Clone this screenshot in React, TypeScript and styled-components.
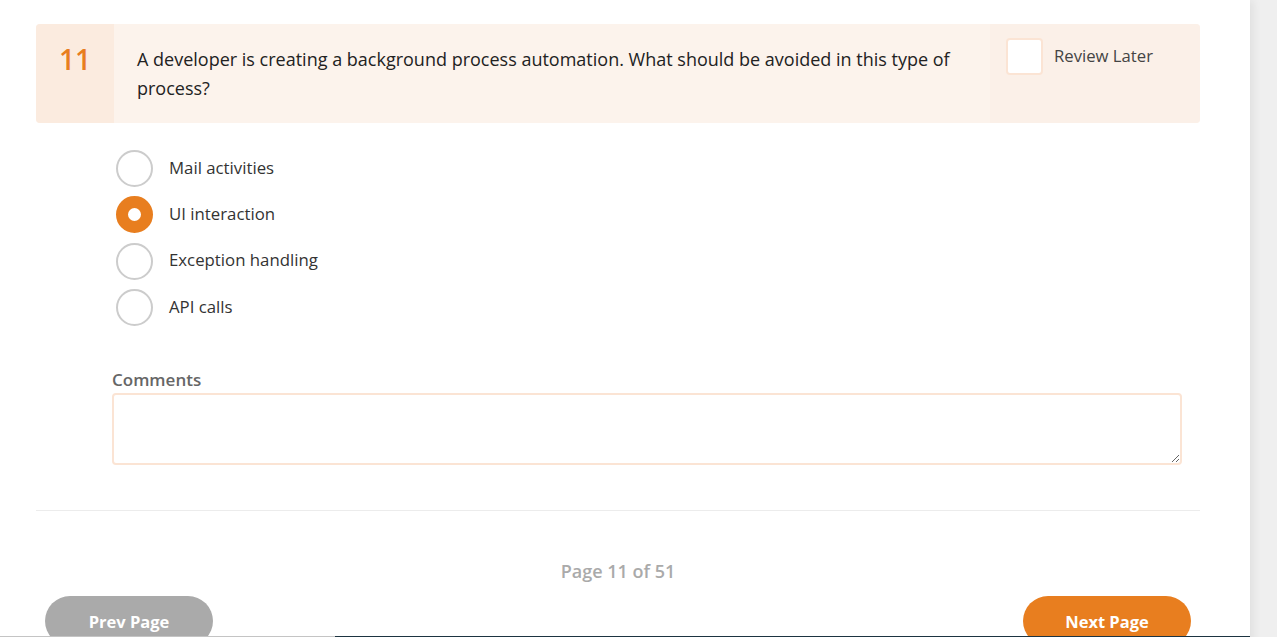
import React, { useState } from "react";
import styled, { createGlobalStyle } from "styled-components";

const ORANGE = "#e87e1f";

const GlobalStyle = createGlobalStyle`
  html, body {
    margin: 0;
    padding: 0;
    background: #efefef;
    font-family: "Open Sans", "Noto Sans", Arial, sans-serif;
    overflow: hidden;
  }
  * { box-sizing: border-box; }
`;

const options = ["Mail activities", "UI interaction", "Exception handling", "API calls"];

const App = () => {
  const [selected, setSelected] = useState(1);
  const [review, setReview] = useState(false);

  return (
    <>
      <GlobalStyle />
      <Page>
        <Content>
          {/* Question header */}
          <QuestionHeader>
            <Number>11</Number>
            <QuestionText>
              A developer is creating a background process automation. What should be avoided in this type of
              process?
            </QuestionText>
            <ReviewCell>
              <Checkbox $checked={review} onClick={() => setReview(!review)} />
              <ReviewLabel>Review Later</ReviewLabel>
            </ReviewCell>
          </QuestionHeader>

          {/* Answers */}
          <OptionList>
            {options.map((label, i) => (
              <OptionRow key={label} onClick={() => setSelected(i)}>
                <Radio $checked={selected === i} />
                <OptionLabel>{label}</OptionLabel>
              </OptionRow>
            ))}
          </OptionList>

          {/* Comments */}
          <CommentBlock>
            <CommentLabel>Comments</CommentLabel>
            <CommentBox />
          </CommentBlock>

          <Divider />

          <PageInfo>Page 11 of 51</PageInfo>

          <NavRow>
            <NavButton $bg="#aaaaaa">Prev Page</NavButton>
            <NavButton $bg={ORANGE}>Next Page</NavButton>
          </NavRow>
        </Content>
      </Page>
      <FooterEdge>
        <FooterPart $w="335px" $bg="#c4c4c4" />
        <FooterPart $w="915px" $bg="#1d3441" />
      </FooterEdge>
    </>
  );
};

const Page = styled.div`
  width: 1250px;
  min-height: 100vh;
  background: #fff;
  box-shadow: 4px 0 8px rgba(0, 0, 0, 0.06);
`;

const Content = styled.div`
  width: 1164px;
  margin-left: 36px;
  padding-top: 24px;
  display: flex;
  flex-direction: column;
`;

const QuestionHeader = styled.div`
  display: grid;
  grid-template-columns: 78px 1fr 210px;
  background: #fcf3ec;
  border-radius: 4px;
  overflow: hidden;
  min-height: 99px;
`;

const Number = styled.div`
  background: #fbebdf;
  color: ${ORANGE};
  font-size: 28px;
  font-weight: 600;
  text-align: center;
  padding-top: 35px;
  line-height: 0;
`;

const QuestionText = styled.div`
  padding: 21px 30px 20px 23px;
  font-size: 18px;
  line-height: 29px;
  color: #222;
`;

const ReviewCell = styled.div`
  background: #fbf0e8;
  display: flex;
  align-items: flex-start;
  gap: 11px;
  padding: 14px 0 0 16px;
`;

const Checkbox = styled.div<{ $checked: boolean }>`
  width: 37px;
  height: 37px;
  border-radius: 4px;
  border: 2px solid #fbe4d4;
  background: ${(p) => (p.$checked ? ORANGE : "#fff")};
  cursor: pointer;
`;

const ReviewLabel = styled.span`
  font-size: 16.7px;
  color: #444;
  line-height: 36px;
`;

const OptionList = styled.div`
  display: flex;
  flex-direction: column;
  gap: 9.4px;
  margin-top: 27px;
  padding-left: 80px;
`;

const OptionRow = styled.label`
  display: flex;
  align-items: center;
  gap: 16px;
  cursor: pointer;
`;

const Radio = styled.span<{ $checked: boolean }>`
  width: 37px;
  height: 37px;
  border-radius: 50%;
  border: ${(p) => (p.$checked ? `12px solid ${ORANGE}` : "2px solid #cccccc")};
  background: #fff;
  flex-shrink: 0;
`;

const OptionLabel = styled.span`
  font-size: 16.8px;
  color: #333;
  line-height: 22px;
  margin-top: -2px;
`;

const CommentBlock = styled.div`
  display: flex;
  flex-direction: column;
  padding-left: 76px;
  padding-right: 18px;
  margin-top: 43px;
`;

const CommentLabel = styled.div`
  font-size: 17px;
  font-weight: 600;
  color: #666;
  line-height: 22px;
  margin-bottom: 2px;
`;

const CommentBox = styled.textarea`
  width: 100%;
  height: 72px;
  border: 2px solid #fbe4d4;
  border-radius: 4px;
  outline: none;
  font-family: inherit;
  font-size: 15px;
  padding: 8px;
`;

const Divider = styled.hr`
  width: 100%;
  border: 0;
  border-top: 1px solid #ececec;
  margin: 45px 0 0;
`;

const PageInfo = styled.div`
  text-align: center;
  font-size: 18px;
  font-weight: 600;
  color: #aaa;
  margin-top: 48px;
  line-height: 24px;
`;

const NavRow = styled.div`
  display: flex;
  justify-content: space-between;
  padding: 0 9px;
  margin-top: 13px;
`;

const NavButton = styled.button<{ $bg: string }>`
  width: 168px;
  height: 50px;
  border: none;
  border-radius: 25px;
  background: ${(p) => p.$bg};
  color: #fff;
  font-family: inherit;
  font-size: 16.5px;
  font-weight: 700;
  cursor: pointer;
`;

const FooterEdge = styled.div`
  position: fixed;
  left: 0;
  bottom: 0;
  height: 1px;
  display: flex;
`;

const FooterPart = styled.div<{ $w: string; $bg: string }>`
  width: ${(p) => p.$w};
  background: ${(p) => p.$bg};
`;

export default App;
